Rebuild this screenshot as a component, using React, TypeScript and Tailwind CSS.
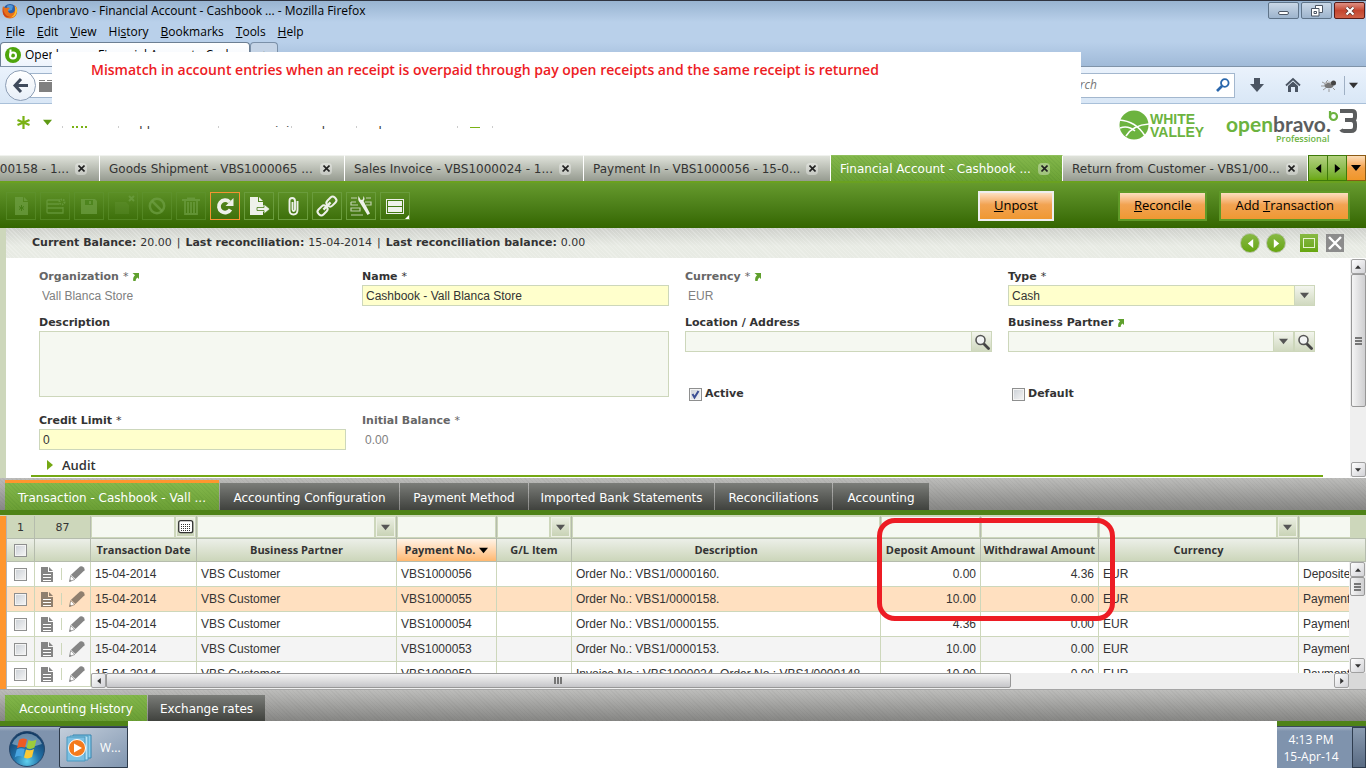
import { useState } from "react";
import type { ReactNode } from "react";
import clsx from "clsx";

// ── Shared class strings ──────────────────────────────────────────────────────

const CHROME_FONT = "font-['Open_Sans','Noto_Sans',sans-serif]";
const TAB_FONT = "font-['DejaVu_Sans',sans-serif] text-xs";
const LABEL_FONT = "font-['DejaVu_Sans',sans-serif] text-[11px] font-bold";
const HEAD_FONT = "font-['Open_Sans','Noto_Sans',sans-serif] text-[11px] font-bold";
const DATA_FONT = "font-['Liberation_Sans',Arial,sans-serif] text-xs";
const FIELD = "h-[21px] w-full min-w-0 border border-[#cdd7bb] px-[3px] text-[#333] outline-none";

// ── Data ──────────────────────────────────────────────────────────────────────

type Row = {
  no: string;
  description: string;
  deposit: string;
  withdrawal: string;
  status: string;
};

const ROWS: Row[] = [
  { no: "VBS1000056", description: "Order No.: VBS1/0000160.", deposit: "0.00", withdrawal: "4.36", status: "Deposited not Cleared" },
  { no: "VBS1000055", description: "Order No.: VBS1/0000158.", deposit: "10.00", withdrawal: "0.00", status: "Payment Cleared" },
  { no: "VBS1000054", description: "Order No.: VBS1/0000155.", deposit: "4.36", withdrawal: "0.00", status: "Payment Cleared" },
  { no: "VBS1000053", description: "Order No.: VBS1/0000153.", deposit: "10.00", withdrawal: "0.00", status: "Payment Cleared" },
  { no: "VBS1000050", description: "Invoice No.: VBS1000024. Order No.: VBS1/0000148.", deposit: "10.00", withdrawal: "0.00", status: "Payment Cleared" },
];

const MENUS = [
  ["", "F", "ile"],
  ["", "E", "dit"],
  ["", "V", "iew"],
  ["Hi", "s", "tory"],
  ["", "B", "ookmarks"],
  ["", "T", "ools"],
  ["", "H", "elp"],
];

const VIEW_TABS = [
  { title: "Goods Shipment - VBS1000158 - 1...", width: "w-[100px] justify-end" },
  { title: "Goods Shipment - VBS1000065 ...", width: "w-[245px]" },
  { title: "Sales Invoice - VBS1000024 - 1...", width: "w-[239px]" },
  { title: "Payment In - VBS1000056 - 15-0...", width: "w-[247px]" },
  { title: "Financial Account - Cashbook ...", width: "w-[232px]" },
  { title: "Return from Customer - VBS1/00...", width: "flex-1" },
];

const CHILD_TABS = [
  { title: "Transaction - Cashbook - Vall ...", width: "w-[214px]" },
  { title: "Accounting Configuration", width: "w-[179px]" },
  { title: "Payment Method", width: "w-[128px]" },
  { title: "Imported Bank Statements", width: "w-[185px]" },
  { title: "Reconciliations", width: "w-[117px]" },
  { title: "Accounting", width: "w-[96px]" },
];

const HISTORY_TABS = [
  { title: "Accounting History", width: "w-[142px]" },
  { title: "Exchange rates", width: "w-[117px]" },
];

// ── Small drawings ────────────────────────────────────────────────────────────

function FirefoxIcon() {
  return (
    <svg className="size-4 shrink-0" viewBox="0 0 16 16" aria-hidden>
      <circle cx="8" cy="8" r="7" fill="#2b5fa8" />
      <path d="M5 3q3-2 6 0l-1 4-4 1z" fill="#4f97d8" />
      <path d="M1 3q1 2 3 2 2-1 4 0-2 1-2 3 1 3 4 2 3-1 3-4 0-2-1-4 4 2 3 7-1 6-7 6.500Q1 15 .500 8.500.400 5 1 3z" fill="#e8701a" />
      <path d="M13 3q3 3 1.500 7-1.500 4-5.500 4.500 3-2 4-5 .600-3 0-6.500z" fill="#fbc02d" />
      <path d="M1 4q0 4 2 7 2 3 5 3-6 1-7-4-.600-3 0-6z" fill="#c7401a" />
    </svg>
  );
}

function Triangle({ dir, className }: { dir: "up" | "down" | "left" | "right"; className?: string }) {
  const points = {
    up: "0,8 10,8 5,2",
    down: "0,2 10,2 5,8",
    left: "8,0 8,10 2,5",
    right: "2,0 2,10 8,5",
  }[dir];
  return (
    <svg className={clsx("shrink-0", className)} viewBox="0 0 10 10" fill="currentColor" aria-hidden>
      <polygon points={points} />
    </svg>
  );
}

function LinkArrow() {
  return (
    <svg className="h-2 w-[7px] shrink-0 text-[#5fa02d]" viewBox="0 0 7 8" fill="currentColor" aria-hidden>
      <path d="M.500 0H7v6L5.500 4.500Q3.500 5.500 3.600 8H1.300Q.500 4.500 3 2.200z" />
    </svg>
  );
}

function Magnifier() {
  return (
    <svg className="size-4" viewBox="0 0 16 16" fill="none" aria-hidden>
      <path d="M9.500 9.500l5 5" stroke="#444" strokeWidth="2.800" strokeLinecap="round" />
      <circle cx="6.500" cy="6" r="4.500" fill="#f2f4f4" stroke="#555" strokeWidth="1.600" />
    </svg>
  );
}

function DocIcon() {
  return (
    <svg className="h-[15px] w-[14px]" viewBox="0 0 14 15" aria-hidden>
      <path d="M1 0h7v5h5v10H1z" fill="currentColor" />
      <path d="M9 0l4 4H9z" fill="currentColor" />
      <path d="M3 7.500h8M3 10.500h8M3 13.500h8" stroke="#fff" />
    </svg>
  );
}

function PencilIcon() {
  return (
    <svg className="size-4" viewBox="0 0 16 16" aria-hidden>
      <path d="M11 .500q2-.800 3.500.700t1 3L6.500 13 2 8.800z" fill="currentColor" />
      <path d="M1.700 9.500L5.800 13.500.500 15.500z" fill="#fff" stroke="currentColor" strokeWidth=".8" />
      <path d="M.300 15.700l.700-2.500 1.700 1.700z" fill="currentColor" />
    </svg>
  );
}

function WhiteValleyLogo() {
  return (
    <svg className="h-8 w-[88px]" viewBox="0 0 88 32" aria-label="White Valley" role="img">
      <circle cx="15" cy="17" r="14.500" fill="#6cb33f" />
      <g stroke="#fff" fill="none" strokeWidth="1.600">
        <path d="M0 12q17 1 26 16" />
        <path d="M7 28q7-11 23-12" />
        <path d="M1 20q8-3 15 3" />
      </g>
      <g fill="#6cb33f" className="font-['Liberation_Sans',Arial,sans-serif] text-[14px] font-bold">
        <text x="31" y="16">WHITE</text>
        <text x="31" y="29">VALLEY</text>
      </g>
    </svg>
  );
}

function OpenbravoLogo() {
  return (
    <svg className="h-9 w-[132px]" viewBox="0 0 132 36" aria-label="Openbravo 3 Professional" role="img">
      <g className="font-['Lato',sans-serif] text-[21px] font-bold">
        <text x="0" y="24" fill="#6cb33f">open<tspan fill="#5b5d5e">bravo.</tspan></text>
      </g>
      <text x="50" y="34" fill="#6cb33f" className="font-['Open_Sans',sans-serif] text-[9px] font-semibold">Professional</text>
      <path d="M104 3v7" stroke="#6cb33f" strokeWidth="2.200" />
      <circle cx="107.500" cy="8.500" r="3.500" fill="none" stroke="#6cb33f" strokeWidth="2.200" />
      <path
        d="M114 3h12q3 0 3 3v3q0 3-3 3h-7M126 12q3 1 3 4v3q0 4-4 4h-7q-2 0-3-1.500"
        fill="none"
        stroke="#5b5d5e"
        strokeWidth="4"
      />
    </svg>
  );
}

function WindowsOrb() {
  return (
    <svg className="size-[38px]" viewBox="0 0 38 38" aria-hidden>
      <defs>
        <radialGradient id="orb" cx=".5" cy=".85" r=".8">
          <stop offset="0" stopColor="#5fd0ee" />
          <stop offset=".45" stopColor="#2272a8" />
          <stop offset="1" stopColor="#123b66" />
        </radialGradient>
      </defs>
      <circle cx="19" cy="19" r="17.500" fill="url(#orb)" stroke="#27476b" />
      <path d="M4 14a16 16 0 0 1 30 0q-15 6-30 0z" fill="#cfe2ef" opacity=".45" />
      <path d="M11 10q4-2.500 8-.500l-2 8q-4-1.500-8 .700z" fill="#ee5a24" />
      <path d="M20.500 10q4 2 8-.500l-2 8q-4 2.500-8 .500z" fill="#9ccc3c" />
      <path d="M8.700 19.500q4-2.200 8-.500l-2 8q-4-2-8 .500z" fill="#49a5e0" />
      <path d="M18 19.500q4 1.800 8-.500l-2 8q-4 2.500-8 .500z" fill="#fcc934" />
    </svg>
  );
}

function MediaPlayerIcon() {
  return (
    <svg className="h-7 w-7" viewBox="0 0 28 28" aria-hidden>
      <path d="M7 1h18v23H7z" fill="#8fd0ee" stroke="#3583ad" />
      <path d="M4 2h18v24H4z" fill="#b7e2f5" stroke="#4a99c0" />
      <path d="M1 3h18v24H1z" fill="#7cc0e2" stroke="#4a99c0" />
      <circle cx="11" cy="14" r="8.500" fill="#f47a1c" stroke="#fff" />
      <path d="M8 9.500v9l8-4.500z" fill="#fff" />
    </svg>
  );
}

// ── Window toolbar icons ──────────────────────────────────────────────────────

const TOOLS: { name: string; disabled?: boolean; focus?: boolean; icon: ReactNode }[] = [
  {
    name: "New in form",
    disabled: true,
    icon: (
      <>
        <path d="M4 1h8v5h5v13H4zM13 1l4 4h-4z" fill="currentColor" />
        <path d="M10.500 9v6M8 10.500l5 3M13 10.500l-5 3" stroke="#467d16" />
      </>
    ),
  },
  {
    name: "New in grid",
    disabled: true,
    icon: (
      <>
        <path d="M15 4H3q-1 0-1 1v11q0 1 1 1h15v-6M2 8h12M2 12h16" fill="none" stroke="currentColor" strokeWidth="1.300" />
        <circle cx="17" cy="6" r="2.500" fill="none" stroke="currentColor" strokeWidth="2" strokeDasharray="1.500 1" />
      </>
    ),
  },
  {
    name: "Save",
    disabled: true,
    icon: (
      <>
        <path d="M2 3h14l2 2v13H2z" fill="currentColor" />
        <path d="M6 4h8v5H6z" fill="#4e851e" />
        <path d="M10 5h2v3h-2z" fill="currentColor" />
      </>
    ),
  },
  {
    name: "Undo and close",
    disabled: true,
    icon: (
      <>
        <path d="M2 6h11l3 3v9H2z" fill="currentColor" opacity=".3" />
        <path d="M16 0l5 5M21 0l-5 5" stroke="currentColor" strokeWidth="2" />
      </>
    ),
  },
  {
    name: "Undo",
    disabled: true,
    icon: (
      <>
        <circle cx="10" cy="10" r="7.200" fill="none" stroke="currentColor" strokeWidth="2.500" />
        <path d="M5 5l10 10" stroke="currentColor" strokeWidth="2.500" />
      </>
    ),
  },
  {
    name: "Delete",
    disabled: true,
    icon: <path d="M1 4h18M6 2.500h8M4 5v13h12V5M7 6v11M10 6v11M13 6v11" fill="none" stroke="currentColor" strokeWidth="1.800" />,
  },
  {
    name: "Refresh",
    focus: true,
    icon: (
      <>
        <path d="M14.500 6A6.200 6.200 0 1 0 15.500 13.500" fill="none" stroke="currentColor" strokeWidth="3.800" />
        <path d="M18.500 2v8h-8z" fill="currentColor" />
      </>
    ),
  },
  {
    name: "Export",
    icon: (
      <>
        <path d="M1 1h8v5h5v3h1v7h-1v3H1zM10 1l4 4h-4z" fill="currentColor" />
        <path d="M8 11.500h7V8l6 5-6 5v-3.500H8z" fill="currentColor" stroke="#477d17" strokeWidth=".8" />
      </>
    ),
  },
  {
    name: "Attachments",
    icon: (
      <path
        d="M9.500 6v7.500q0 1.500 1.200 1.500T12 13.500V5q0-3-2.800-3T6.500 5v9q0 4.500 4 4.500t4-4.500V5"
        fill="none"
        stroke="currentColor"
        strokeWidth="1.900"
      />
    ),
  },
  {
    name: "Linked items",
    icon: (
      <g transform="rotate(-45 10 10)" fill="none" stroke="currentColor" strokeWidth="2">
        <rect x="-1.500" y="6.500" width="10.500" height="7" rx="3" />
        <rect x="11" y="6.500" width="10.500" height="7" rx="3" />
        <path d="M5 10h10" strokeWidth="2.400" />
      </g>
    ),
  },
  {
    name: "Audit trail",
    icon: (
      <>
        <path d="M0 2h6M15 2h5M0 6h5M0 6v3h7M14 6h6v3h-5M0 12h9v3H0zM0 19h12" fill="none" stroke="currentColor" strokeWidth="1.200" opacity=".7" />
        <path d="M7.500 0q-1 4 1 6l8 13 2.500-1.500-6.500-12.500q2-2 0-5L12 3.500 9.800 4z" fill="currentColor" />
      </>
    ),
  },
  {
    name: "Grid configuration",
    icon: (
      <>
        <rect x="1.500" y="3.500" width="17" height="14" fill="#427a12" stroke="currentColor" />
        <path d="M3 5h14v5H3zM3 11h14v5H3z" fill="currentColor" />
        <path d="M24 19v4h-4z" fill="#fff" />
      </>
    ),
  },
];

// ── Controls ──────────────────────────────────────────────────────────────────

function Checkbox({ id, label, defaultChecked }: { id: string; label?: string; defaultChecked?: boolean }) {
  return (
    <span className="relative inline-flex size-[13px] shrink-0">
      <input
        id={id}
        type="checkbox"
        aria-label={label}
        defaultChecked={defaultChecked}
        className="peer m-0 size-[13px] appearance-none border border-[#8e8f8f] bg-linear-to-br from-[#cbd0d6] to-[#f6f6f6] shadow-[inset_0_0_0_1px_#f4f4f4]"
      />
      <svg className="pointer-events-none absolute inset-0 hidden size-[13px] peer-checked:block" viewBox="0 0 13 13" aria-hidden>
        <path d="M3.500 6l2 3.500L9.500 3" fill="none" stroke="#3c4f94" strokeWidth="2" />
      </svg>
    </span>
  );
}

function Label({ htmlFor, children, required, link, dim }: { htmlFor: string; children: string; required?: boolean; link?: boolean; dim?: boolean }) {
  return (
    <label htmlFor={htmlFor} className={clsx(LABEL_FONT, "flex h-[17px] items-center gap-1 leading-4", dim ? "text-[#666]" : "text-[#333]")}>
      {children}
      {required && <span className="font-normal">*</span>}
      {link && <LinkArrow />}
    </label>
  );
}

function PickerButton({ label, children }: { label: string; children: ReactNode }) {
  return (
    <button
      type="button"
      aria-label={label}
      className="flex w-[21px] shrink-0 items-center justify-center border border-[#cdd7bb] bg-linear-to-b from-[#f3f5ee] to-[#d0d9bf] text-[#555]"
    >
      {children}
    </button>
  );
}

function ScrollButton({ dir }: { dir: "up" | "down" | "left" | "right" }) {
  return (
    <button
      type="button"
      aria-label={`Scroll ${dir}`}
      className="flex size-[15px] shrink-0 items-center justify-center rounded-xs border border-[#a0a0a0] bg-linear-to-br from-white to-[#d2d2d6] text-[#333]"
    >
      <Triangle dir={dir} className="size-[6px]" />
    </button>
  );
}

function VerticalScroll({ thumb, className }: { thumb: string; className?: string }) {
  return (
    <div className={clsx("flex flex-col items-center bg-[#efefef]", className)}>
      <ScrollButton dir="up" />
      <div className="w-full flex-1">
        <div className={clsx("mx-auto flex w-[15px] flex-col items-center justify-center gap-px rounded-xs border border-[#979797] bg-linear-to-r from-[#f5f5f5] to-[#cfcfd1]", thumb)}>
          <span className="h-0.5 w-[7px] bg-[#777]" />
          <span className="h-0.5 w-[7px] bg-[#777]" />
          <span className="h-0.5 w-[7px] bg-[#777]" />
        </div>
      </div>
      <ScrollButton dir="down" />
    </div>
  );
}

// ── Browser chrome ────────────────────────────────────────────────────────────

function BrowserChrome() {
  return (
    <div className={clsx(CHROME_FONT, "bg-[#b9d0ea] text-xs text-black")}>
      <div className="flex h-[22px] items-start border-t border-[#2f3440] bg-linear-to-b from-[#98b4d1] to-[#b9d0ea] pl-0.5">
        <div className="flex flex-1 items-center gap-2">
          <FirefoxIcon />
          <span className="leading-5">Openbravo - Financial Account - Cashbook ... - Mozilla Firefox</span>
        </div>
        <div className="flex gap-[2px] pt-px pr-px">
          <button type="button" aria-label="Minimize" className="flex h-[17px] w-[31px] items-center justify-center rounded-xs border border-[#5f7489] bg-linear-to-b from-[#c9d7e6] to-[#9db4cd]">
            <span className="mt-1 h-1 w-[11px] rounded-xs border border-[#4b5563] bg-white" />
          </button>
          <button type="button" aria-label="Restore" className="flex h-[17px] w-[31px] items-center justify-center rounded-xs border border-[#5f7489] bg-linear-to-b from-[#c9d7e6] to-[#9db4cd]">
            <svg className="size-3" viewBox="0 0 12 12" fill="#fff" stroke="#4b5563" aria-hidden>
              <path d="M4.500.500h7v7h-7z" />
              <path d="M.500 3.500h7.500v7.500H.500z" />
              <path d="M3 6.500h2.500v2H3z" />
            </svg>
          </button>
          <button type="button" aria-label="Close" className="flex h-[17px] w-[31px] items-center justify-center rounded-xs border border-[#5a1c18] bg-linear-to-b from-[#dd8f83] via-[#c4452f] to-[#cf6148]">
            <svg className="size-[10px]" viewBox="0 0 10 10" aria-hidden>
              <path d="M1.500 1.500l7 7M8.500 1.500l-7 7" stroke="#5c3630" strokeWidth="3.800" />
              <path d="M1.500 1.500l7 7M8.500 1.500l-7 7" stroke="#fff" strokeWidth="2.200" />
            </svg>
          </button>
        </div>
      </div>

      <nav className="flex h-5 items-center gap-3 pl-1.5">
        {MENUS.map(([before, key, after]) => (
          <button key={key} type="button">
            {before}
            <u>{key}</u>
            {after}
          </button>
        ))}
      </nav>

      <div className="flex h-6 items-end bg-linear-to-b from-[#b9d0ea] to-[#a0bad8]">
        <div className="flex h-6 w-[250px] items-center gap-1 rounded-t border border-b-0 border-[#6c7f93] bg-linear-to-b from-white to-[#eef4fc] pl-1">
          <svg className="size-4 shrink-0" viewBox="0 0 16 16" aria-hidden>
            <circle cx="8" cy="8" r="8" fill="#4ea50c" />
            <path d="M5.500 2.500v6" stroke="#fff" strokeWidth="2" />
            <circle cx="8" cy="8.500" r="3" fill="none" stroke="#fff" strokeWidth="2" />
          </svg>
          <span className="truncate">Openbravo - Financial Account - Cashb...</span>
        </div>
        <button type="button" aria-label="Open a new tab" className="h-6 w-7 rounded-t border border-b-0 border-[#7b90a8] bg-[#c5d4e6] leading-5">
          +
        </button>
      </div>

      <div className="flex h-[38px] items-center border-t border-b border-t-[#7f93a9] border-b-[#a9c0d9] bg-linear-to-b from-[#eaf2fc] to-[#d9e7f6] pr-2 pl-[5px]">
        <button type="button" aria-label="Back" className="z-1 flex size-[31px] items-center justify-center rounded-full border border-[#8d9eb5] bg-linear-to-b from-white to-[#e8eff8]">
          <svg className="size-[17px]" viewBox="0 0 17 17" fill="none" stroke="#404b5c" strokeWidth="3" aria-hidden>
            <path d="M9 2L3 8.500 9 15M3 8.500h13" />
          </svg>
        </button>
        <div className="-ml-2 flex h-[25px] flex-1 items-center border border-[#9fb4cc] bg-white pl-2.5">
          <svg className="size-[15px]" viewBox="0 0 15 15" aria-hidden>
            <path d="M0 2h6v1H0zM8 2h6v1H8zM0 4h15v10H0z" fill="#808080" />
          </svg>
        </div>
        <label className="ml-2 flex h-[25px] w-[180px] items-center border border-[#a3b7ce] bg-white pr-1">
          <span className="sr-only">Search</span>
          <input type="search" placeholder="Search" className="min-w-0 flex-1 pl-[5px] italic outline-none placeholder:text-[#777]" />
          <svg className="size-[14px] shrink-0" viewBox="0 0 14 14" fill="none" stroke="#2a67ac" aria-hidden>
            <circle cx="8.800" cy="5" r="3.800" strokeWidth="1.800" />
            <path d="M6 8l-5 5" strokeWidth="2.600" />
          </svg>
        </label>
        <div className="ml-[14px] flex items-center gap-5">
          <button type="button" aria-label="Downloads">
            <svg className="size-4" viewBox="0 0 16 16" fill="#4b5563" aria-hidden>
              <path d="M5 1h6v6h4l-7 8-7-8h4z" />
            </svg>
          </button>
          <button type="button" aria-label="Home">
            <svg className="size-4" viewBox="0 0 16 16" aria-hidden>
              <path d="M1 8.500L8 2l7 6.500" fill="none" stroke="#4b5563" strokeWidth="1.800" />
              <path d="M3 9l5-4.500L13 9v6h-3v-5H6v5H3z" fill="#4b5563" />
            </svg>
          </button>
          <button type="button" aria-label="Firebug">
            <svg className="size-4" viewBox="0 0 16 16" aria-hidden>
              <path d="M1 5l4 2M0 9h4M2 13l4-3M8 12v3M12 11l2 2M5 5l2-2" stroke="#999" />
              <ellipse cx="8" cy="8" rx="4.500" ry="3.300" fill="#777" />
              <circle cx="12.500" cy="6" r="2.500" fill="#444" />
              <path d="M4 7q3-3 6-1" stroke="#ccc" fill="none" />
            </svg>
          </button>
        </div>
        <button type="button" aria-label="More tools" className="ml-[7px] flex h-[19px] items-center border-l border-[#9fb0c4] pl-1">
          <Triangle dir="down" className="size-[9px] text-[#333]" />
        </button>
      </div>
    </div>
  );
}

// ── Application header ────────────────────────────────────────────────────────

function AppHeader() {
  return (
    <header className="flex h-[51px] items-start bg-white">
      <div className={clsx(TAB_FONT, "flex flex-1 items-start pt-[11px] pl-4 text-[#333]")}>
        <button type="button" aria-label="Quick create" className="flex w-[46px] items-center gap-3">
          <svg className="size-[15px]" viewBox="0 0 15 15" stroke="#7ab214" strokeWidth="2.200" aria-hidden>
            <path d="M7.500 1v13M1.500 5l12 5M13.500 5l-12 5" />
          </svg>
          <Triangle dir="down" className="size-[9px] text-[#5f9a14]" />
        </button>
        <span className="h-[13px] w-[10px] border-l border-[#ccc]" />
        <svg className="h-[13px] w-[46px]" viewBox="0 0 46 13" stroke="#7ab214" strokeWidth="2" fill="none" aria-hidden>
          <path d="M1 2v11M5 2v11M10 2v11M14 2v11" />
        </svg>
        <button type="button" className="h-[13px] w-[100px] border-l border-[#ccc] pl-3 text-left leading-[14px]">Application</button>
        <button type="button" className="h-[13px] w-[73px] border-l border-[#ccc] pl-4 text-left leading-[14px]">Alerts (0)</button>
        <button type="button" className="h-[13px] w-[65px] border-l border-[#ccc] pl-2.5 text-left leading-[14px]">Help</button>
        <button type="button" className="h-[13px] w-[101px] border-l border-[#ccc] pl-3 text-left leading-[14px]">Openbravo</button>
        <span className="flex h-[13px] w-9 items-end border-r border-l border-[#ccc] pl-3">
          <i className="h-px w-2.5 bg-[#7ab214]" />
        </span>
      </div>
      <div className="flex items-start gap-[19px] pt-1 pr-2">
        <WhiteValleyLogo />
        <OpenbravoLogo />
      </div>
    </header>
  );
}

function ViewTabs() {
  const [active, setActive] = useState("Financial Account - Cashbook ...");
  return (
    <div className="flex h-7 w-full border-b-2 border-[#6aa11f] bg-[#9a9e95]">
      {VIEW_TABS.map((tab) => (
        <div
          key={tab.title}
          className={clsx(
            "flex min-w-0 shrink-0 items-center overflow-hidden border-t border-r pl-[9px]",
            tab.width,
            tab.title === active
              ? "border-t-[#8fbf5c] border-r-white bg-[repeating-linear-gradient(45deg,rgba(0,60,0,0.05)_0_1px,transparent_1px_3px),linear-gradient(#84b84c,#6aa034)] text-white"
              : "border-t-[#f0f2ee] border-r-white bg-linear-to-b from-[#dfe2da] to-[#969b90] text-[#333]",
          )}
        >
          <button type="button" onClick={() => setActive(tab.title)} className={clsx(TAB_FONT, "whitespace-nowrap", !tab.width.includes("justify-end") && "flex-1 text-left")}>
            {tab.title}
          </button>
          <button type="button" aria-label={`Close ${tab.title}`} className="mr-3 ml-1.5 flex size-3 shrink-0 items-center justify-center rounded-sm bg-white/35">
            <svg className="size-[7px]" viewBox="0 0 7 7" stroke="#222" strokeWidth="1.600" aria-hidden>
              <path d="M.500.500l6 6M6.500.500l-6 6" />
            </svg>
          </button>
        </div>
      ))}
      <button type="button" aria-label="Previous tabs" className="flex w-5 shrink-0 items-center justify-center border border-[#3f7a0a] bg-linear-to-b from-[#b3d17e] to-[#6ba80c] text-black">
        <Triangle dir="left" className="size-[9px]" />
      </button>
      <button type="button" aria-label="Next tabs" className="flex w-[19px] shrink-0 items-center justify-center border border-l-0 border-[#3f7a0a] bg-linear-to-b from-[#b3d17e] to-[#6ba80c] text-black">
        <Triangle dir="right" className="size-[9px]" />
      </button>
      <button type="button" aria-label="All tabs" className="flex w-[19px] shrink-0 items-center justify-center border border-l-0 border-[#8a5a14] bg-linear-to-b from-[#fbdcb6] via-[#f3a046] to-[#f09628] text-black">
        <Triangle dir="down" className="size-[10px]" />
      </button>
    </div>
  );
}

function ActionButton({ before, hotkey, after, focused }: { before?: string; hotkey: string; after: string; focused?: boolean }) {
  return (
    <button
      type="button"
      className={clsx(
        CHROME_FONT,
        "h-[30px] border-2 bg-linear-to-b from-[#fbdfc0] via-[#f2a351] via-45% to-[#ef9831] px-[14px] text-[13px] whitespace-nowrap text-black",
        focused ? "border-[#eee]" : "border-[#5f9a28]",
      )}
    >
      {before}
      <u>{hotkey}</u>
      {after}
    </button>
  );
}

function WindowToolbar() {
  return (
    <div className="flex h-[45px] items-center bg-linear-to-b from-[#669a2d] to-[#346600] pr-4 pl-1.5">
      <div className="flex flex-1 gap-1">
        {TOOLS.map((tool) => (
          <button
            key={tool.name}
            type="button"
            aria-label={tool.name}
            className={clsx(
              "flex h-7 w-[30px] items-center justify-center border",
              tool.focus ? "border-[#f59331]" : tool.disabled ? "border-[#5f9330]/60" : "border-[#6a9c3c]",
              tool.disabled ? "text-[#6f9f45]/70" : "text-[#eef1ea]",
            )}
          >
            <svg className="size-5 overflow-visible" viewBox="0 0 20 20" aria-hidden>
              {tool.icon}
            </svg>
          </button>
        ))}
      </div>
      <ActionButton hotkey="U" after="npost" focused />
      <span className="w-16" />
      <ActionButton hotkey="R" after="econcile" />
      <span className="w-3" />
      <ActionButton before="Add " hotkey="T" after="ransaction" />
    </div>
  );
}

function StatusBar() {
  return (
    <div className="flex h-[30px] items-center bg-[repeating-linear-gradient(45deg,rgba(255,255,255,0.2)_0_1px,transparent_1px_3px),linear-gradient(#cfd1cc,#e8ebe4_60%)] pr-[22px] pl-[26px]">
      <p className={clsx(LABEL_FONT, "flex flex-1 text-[#333]")}>
        <span>Current Balance: <span className="font-normal">20.00</span></span>
        <span className="px-[5px] font-normal">|</span>
        <span>Last reconciliation: <span className="font-normal">15-04-2014</span></span>
        <span className="px-[5px] font-normal">|</span>
        <span>Last reconciliation balance: <span className="font-normal">0.00</span></span>
      </p>
      <div className="flex items-center gap-[6px]">
        <button type="button" aria-label="Previous record" className="flex size-5 items-center justify-center rounded-full border border-[#b9c4ab] bg-linear-to-b from-[#88b944] to-[#67a60c] text-white">
          <Triangle dir="left" className="size-[9px]" />
        </button>
        <button type="button" aria-label="Next record" className="flex size-5 items-center justify-center rounded-full border border-[#b9c4ab] bg-linear-to-b from-[#88b944] to-[#67a60c] text-white">
          <Triangle dir="right" className="size-[9px]" />
        </button>
        <button type="button" aria-label="Maximize" className="ml-2 flex size-[18px] items-center justify-center bg-linear-to-b from-[#88b944] to-[#67a60c]">
          <span className="h-[10px] w-3 border border-[#e6f2d0]" />
        </button>
        <button type="button" aria-label="Close form" className="ml-0.5 flex size-[18px] items-center justify-center bg-[#8c8c8c]">
          <svg className="size-[14px]" viewBox="0 0 14 14" stroke="#fff" strokeWidth="2.400" aria-hidden>
            <path d="M1 1l12 12M13 1L1 13" />
          </svg>
        </button>
      </div>
    </div>
  );
}

// ── Header form ───────────────────────────────────────────────────────────────

function AccountForm() {
  return (
    <div className="flex bg-white">
      <form className={clsx(DATA_FONT, "min-w-0 flex-1 pt-[10px]")}>
        <div className="grid grid-cols-4 gap-x-4 gap-y-2 pr-[35px] pl-[33px]">
          <div>
            <Label htmlFor="org" required link dim>Organization</Label>
            <input id="org" readOnly defaultValue="Vall Blanca Store" className="h-[21px] w-full px-[3px] text-[#808080] outline-none" />
          </div>
          <div>
            <Label htmlFor="name" required>Name</Label>
            <input id="name" defaultValue="Cashbook - Vall Blanca Store" className={clsx(FIELD, "bg-[#ffffcc]")} />
          </div>
          <div>
            <Label htmlFor="currency" required link dim>Currency</Label>
            <input id="currency" readOnly defaultValue="EUR" className="h-[21px] w-full px-[3px] text-[#808080] outline-none" />
          </div>
          <div>
            <Label htmlFor="type" required>Type</Label>
            <div className="relative">
              <select id="type" defaultValue="Cash" className={clsx(FIELD, "appearance-none bg-[#ffffcc]")}>
                <option>Cash</option>
                <option>Bank</option>
              </select>
              <span className="pointer-events-none absolute inset-y-0 right-0 flex w-[21px] items-center justify-center border border-[#cdd7bb] bg-linear-to-b from-[#f3f5ee] to-[#d0d9bf] text-[#555]">
                <Triangle dir="down" className="size-[9px]" />
              </span>
            </div>
          </div>

          <div className="col-span-2 row-span-2">
            <Label htmlFor="description">Description</Label>
            <textarea id="description" className="block h-[66px] w-full resize-none border border-[#cdd7bb] bg-[#f5f8f1] p-[3px] outline-none" />
          </div>
          <div>
            <Label htmlFor="location">Location / Address</Label>
            <div className="flex">
              <input id="location" className={clsx(FIELD, "border-r-0 bg-[#f5f8f1]")} />
              <PickerButton label="Search location"><Magnifier /></PickerButton>
            </div>
          </div>
          <div>
            <Label htmlFor="partner" link>Business Partner</Label>
            <div className="flex">
              <input id="partner" className={clsx(FIELD, "border-r-0 bg-[#f5f8f1]")} />
              <PickerButton label="Open business partners"><Triangle dir="down" className="size-[9px]" /></PickerButton>
              <PickerButton label="Search business partner"><Magnifier /></PickerButton>
            </div>
          </div>

          <div className="flex h-11 items-center gap-[3px] pt-6 pl-1">
            <Checkbox id="active" defaultChecked />
            <Label htmlFor="active">Active</Label>
          </div>
          <div className="flex h-11 items-center gap-[3px] pt-6 pl-1">
            <Checkbox id="default" />
            <Label htmlFor="default">Default</Label>
          </div>

          <div>
            <Label htmlFor="credit" required>Credit Limit</Label>
            <input id="credit" defaultValue="0" className={clsx(FIELD, "bg-[#ffffcc]")} />
          </div>
          <div>
            <Label htmlFor="initial" required dim>Initial Balance</Label>
            <input id="initial" readOnly defaultValue="0.00" className="h-[21px] w-full px-[3px] text-[#808080] outline-none" />
          </div>
        </div>

        <div className="mt-1.5 mr-[27px] mb-px ml-[25px] border-b-2 border-[#74a813] pb-px pl-3.5">
          <button type="button" className={clsx(CHROME_FONT, "flex items-center gap-[7px] text-[13px] leading-[18px] font-semibold text-[#333]")}>
            <Triangle dir="right" className="size-[10px] text-[#74a813]" />
            Audit
          </button>
        </div>
      </form>
      <VerticalScroll thumb="h-[133px]" className="mt-px mb-px w-4" />
    </div>
  );
}

// ── Child tab strips ──────────────────────────────────────────────────────────

function TabStrip({ tabs, highlight }: { tabs: { title: string; width: string }[]; highlight?: boolean }) {
  const [active, setActive] = useState(0);
  return (
    <div className={clsx("border-b-5 border-[#4f8318] bg-[repeating-linear-gradient(45deg,rgba(0,0,0,0.03)_0_1px,transparent_1px_3px),linear-gradient(#bdbdbb,#868684)] pl-[5px]", highlight ? "h-[37px] pt-0.5" : "h-9 pt-[5px]")}>
      <div role="tablist" className="flex h-full items-end gap-px">
        {tabs.map((tab, i) => (
          <button
            key={tab.title}
            type="button"
            role="tab"
            aria-selected={i === active}
            onClick={() => setActive(i)}
            className={clsx(
              TAB_FONT,
              "shrink-0 pt-0.5 whitespace-nowrap text-white",
              tab.width,
              i === active
                ? "bg-[repeating-linear-gradient(45deg,rgba(0,60,0,0.05)_0_1px,transparent_1px_3px),linear-gradient(#84b84c,#6a9e34)]"
                : "bg-linear-to-b from-[#7b7d79] to-[#40423e]",
              highlight && i === active && "border-t-3 border-[#ff962e]",
              highlight && i !== active ? "h-[27px]" : "h-full",
            )}
          >
            {tab.title}
          </button>
        ))}
      </div>
    </div>
  );
}

// ── Transaction grid ──────────────────────────────────────────────────────────

function FilterCell({ label, picker, children }: { label: string; picker?: boolean; children?: ReactNode }) {
  return (
    <td className="border-r border-b border-[#b5bcad] bg-[#cdd7bb] p-0">
      <div className="flex h-[22px] gap-[2px] p-px">
        <input aria-label={`Filter ${label}`} className="min-w-0 flex-1 bg-[#f5f8f1] px-1 outline-none" />
        {picker && (
          <button type="button" aria-label={`Pick ${label}`} className="flex w-[19px] shrink-0 items-center justify-center border border-[#eef1e6] bg-linear-to-b from-[#e9ede0] to-[#c9d3b6] text-[#555]">
            {children ?? <Triangle dir="down" className="size-[9px]" />}
          </button>
        )}
      </div>
    </td>
  );
}

function TransactionGrid() {
  const head = "h-[23px] border-r border-b border-[#b5bcad] bg-linear-to-b from-[#ecefe8] to-[#ccd6ba] p-0 text-center whitespace-nowrap";
  const count = "border-r border-b border-[#b5bcad] bg-[#cdd7bb] p-0 text-center";
  const cell = "h-[25px] truncate border-r border-b border-[#cdd7bb] px-1 py-0";
  return (
    <section className="relative flex h-[175px] overflow-hidden border-t border-b border-t-[#cdd7bb] border-b-[#a5a5a5] bg-white">
      <div className="w-[6px] shrink-0 bg-[#ff962e]" />
      <div className="min-w-0 flex-1 border-l border-[#b5b5b5]">
        <table className={clsx(DATA_FONT, "w-full table-fixed border-separate border-spacing-0 text-[#333]")}>
          <colgroup>
            <col className="w-[28px]" />
            <col className="w-[56px]" />
            <col className="w-[106px]" />
            <col className="w-[200px]" />
            <col className="w-[100px]" />
            <col className="w-[75px]" />
            <col />
            <col className="w-[100px]" />
            <col className="w-[118px]" />
            <col className="w-[200px]" />
            <col className="w-[67px]" />
          </colgroup>
          <thead>
            <tr>
              <td className={count}><span className="font-['DejaVu_Sans',sans-serif] text-[11px]">1</span></td>
              <td className={count}><span className="font-['DejaVu_Sans',sans-serif] text-[11px]">87</span></td>
              <FilterCell label="transaction date" picker>
                <svg className="h-[14px] w-4" viewBox="0 0 16 14" aria-hidden>
                  <rect x=".7" y=".7" width="14" height="12" rx="2" fill="#fff" stroke="#333" strokeWidth="1.300" />
                  <path d="M3 4.500h10M3 6.500h10M3 8.500h10M3 10.500h10" stroke="#333" strokeDasharray="1 1" />
                </svg>
              </FilterCell>
              <FilterCell label="business partner" picker />
              <FilterCell label="payment number" />
              <FilterCell label="G/L item" picker />
              <FilterCell label="description" />
              <FilterCell label="deposit amount" />
              <FilterCell label="withdrawal amount" />
              <FilterCell label="currency" picker />
              <td className="border-b border-[#b5bcad] bg-[#cdd7bb] py-0 pr-4 pl-px">
                <input aria-label="Filter status" className="block h-5 w-full bg-[#f5f8f1] outline-none" />
              </td>
            </tr>
            <tr className={HEAD_FONT}>
              <th className={head}>
                <span className="flex justify-center"><Checkbox id="all" label="Select all" /></span>
              </th>
              <th className={head} />
              <th className={head}>Transaction Date</th>
              <th className={head}>Business Partner</th>
              <th className="border-r border-b border-[#b5bcad] bg-linear-to-b from-[#fff3e6] to-[#ffb870] p-0 whitespace-nowrap">
                <span className="flex items-center justify-center gap-1">
                  Payment No. <Triangle dir="down" className="size-[9px] text-black" />
                </span>
              </th>
              <th className={head}>G/L Item</th>
              <th className={head}>Description</th>
              <th className={head}>Deposit Amount</th>
              <th className={head}>Withdrawal Amount</th>
              <th className={head}>Currency</th>
              <th className={head} />
            </tr>
          </thead>
          <tbody>
            {ROWS.map((row, i) => (
              <tr key={row.no} className={i === 1 ? "bg-[#ffe0c0]" : i % 2 === 1 ? "bg-[#f4f4f4]" : "bg-white"}>
                <td className="border-r border-b border-[#cdd7bb] p-0">
                  <span className="flex justify-center"><Checkbox id={`row-${i}`} label={`Select ${row.no}`} /></span>
                </td>
                <td className="border-r border-b border-[#cdd7bb] p-0">
                  <span className={clsx("flex items-center pl-[5px]", i === 1 ? "text-[#8f7f6e]" : "text-[#858585]")}>
                    <button type="button" aria-label="Open in form"><DocIcon /></button>
                    <span className="mx-[7px] h-3 w-px bg-[#cdd7bb]" />
                    <button type="button" aria-label="Edit in grid"><PencilIcon /></button>
                  </span>
                </td>
                <td className={cell}>15-04-2014</td>
                <td className={cell}>VBS Customer</td>
                <td className={cell}>{row.no}</td>
                <td className={cell} />
                <td className={cell}>{row.description}</td>
                <td className={clsx(cell, "text-right")}>{row.deposit}</td>
                <td className={clsx(cell, "text-right")}>{row.withdrawal}</td>
                <td className={cell}>EUR</td>
                <td className="overflow-hidden border-b border-[#cdd7bb] py-0 pl-1 whitespace-nowrap">{row.status}</td>
              </tr>
            ))}
          </tbody>
        </table>
      </div>

      <VerticalScroll thumb="h-[19px]" className="absolute right-0 bottom-4 h-[111px] w-[17px]" />

      <div className="absolute right-[17px] bottom-0 left-[91px] flex h-4 items-start bg-[#efefef]">
        <ScrollButton dir="left" />
        <div className="flex-1">
          <div className="flex h-[15px] w-14/19 items-center justify-center gap-px rounded-xs border border-[#979797] bg-linear-to-b from-[#f5f5f5] to-[#c6c6c9]">
            <span className="h-[7px] w-0.5 bg-[#777]" />
            <span className="h-[7px] w-0.5 bg-[#777]" />
            <span className="h-[7px] w-0.5 bg-[#777]" />
          </div>
        </div>
        <ScrollButton dir="right" />
      </div>
      <div className="absolute right-0 bottom-0 h-4 w-[17px] bg-[#d9d9d9]" />

      {/* Highlight around the two amount columns */}
      <div className="pointer-events-none absolute top-[2px] right-[251px] h-[103px] w-[238px] rounded-[18px] border-5 border-[#ed1c24]" />
    </section>
  );
}

// ── Windows taskbar ───────────────────────────────────────────────────────────

function Taskbar() {
  return (
    <footer className={clsx(CHROME_FONT, "flex h-[42px] items-stretch border-t border-[#3b4a5c] bg-linear-to-b from-[#a3b3c7] to-[#7f93ad] to-10% pl-2 text-xs text-white")}>
      <button type="button" aria-label="Start" className="mr-[13px] pt-0.5"><WindowsOrb /></button>
      <button type="button" className="flex w-[69px] items-center gap-1.5 rounded-l-xs border border-[#2d3a4a] bg-linear-to-br from-[#c3cedb] to-[#8196b0] pl-[6px]">
        <MediaPlayerIcon />
        W...
      </button>
      <div className="flex-1" />
      <div className="flex w-[68px] flex-col justify-center text-center leading-[17px]">
        <span>4:13 PM</span>
        <span>15-Apr-14</span>
      </div>
      <button type="button" aria-label="Show desktop" className="ml-[7px] w-[14px] border border-[#2f3d4f] bg-linear-to-b from-[#8b9cb1] to-[#5a6c84]" />
    </footer>
  );
}

export default function App() {
  return (
    <div className="relative min-h-screen overflow-hidden bg-white">
      <BrowserChrome />
      <AppHeader />
      <ViewTabs />
      <WindowToolbar />
      <main className="border-l-6 border-[#cdd7bb]">
        <StatusBar />
        <AccountForm />
      </main>
      <TabStrip tabs={CHILD_TABS} highlight />
      <TransactionGrid />
      <TabStrip tabs={HISTORY_TABS} />
      <Taskbar />

      {/* Issue note pasted over the browser toolbar */}
      <div className="absolute top-[52px] right-[285px] left-[52px] z-10 h-[74px] bg-white pt-2 pl-[39px]">
        <p className="font-['Open_Sans','Noto_Sans',sans-serif] text-sm font-semibold whitespace-nowrap text-[#ed1c24]">
          Mismatch in account entries when an receipt is overpaid through pay open receipts and the same receipt is returned
        </p>
      </div>
      <div className="absolute right-[89px] bottom-0 left-[128px] z-10 h-[47px] bg-white" />
    </div>
  );
}
